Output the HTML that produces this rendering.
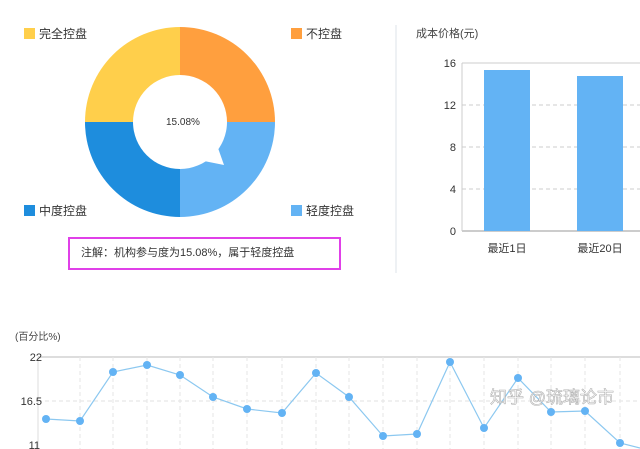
<!DOCTYPE html>
<html><head><meta charset="utf-8"><style>
body{margin:0;width:640px;height:449px;background:#fff;overflow:hidden;font-family:"Liberation Sans","Noto Sans CJK SC",sans-serif;}
</style></head><body>
<svg width="640" height="449" xmlns="http://www.w3.org/2000/svg" style="position:absolute;left:0;top:0" font-family="Liberation Sans, Noto Sans CJK SC, sans-serif">
<!-- donut -->
<path d="M180,122 L180,27 A95,95 0 0 0 85,122 Z" fill="#FFCF4B"/>
<path d="M180,122 L180,27 A95,95 0 0 1 275,122 Z" fill="#FF9F3E"/>
<path d="M180,122 L275,122 A95,95 0 0 1 180,217 Z" fill="#63B3F4"/>
<path d="M180,122 L180,217 A95,95 0 0 1 85,122 Z" fill="#1E8DDD"/>
<circle cx="180" cy="122" r="47" fill="#fff"/>
<path d="M218,148 L224,165 L204,161 Z" fill="#fff"/>
<text x="166" y="125" font-size="10" fill="#333">15.08%</text>
<rect x="24" y="28" width="11" height="11" fill="#FFCF4B"/>
<text x="39" y="38" font-size="12" fill="#333">完全控盘</text>
<rect x="291" y="28" width="11" height="11" fill="#FF9F3E"/>
<text x="306" y="38" font-size="12" fill="#333">不控盘</text>
<rect x="24" y="205" width="11" height="11" fill="#1E8DDD"/>
<text x="39" y="215" font-size="12" fill="#333">中度控盘</text>
<rect x="291" y="205" width="11" height="11" fill="#63B3F4"/>
<text x="306" y="215" font-size="12" fill="#333">轻度控盘</text>
<rect x="69" y="238" width="271" height="31" fill="none" stroke="#E040E8" stroke-width="2"/>
<text x="81" y="256" font-size="11" fill="#333">注解：机构参与度为15.08%，属于轻度控盘</text>
<line x1="396" y1="25" x2="396" y2="273" stroke="#dde3ea"/>
<!-- bar chart -->
<text x="416" y="37" font-size="11" fill="#444">成本价格(元)</text>
<line x1="462" y1="63" x2="640" y2="63" stroke="#ccc"/>
<g stroke="#ccc" stroke-dasharray="4,3"><line x1="462" y1="105" x2="640" y2="105"/><line x1="462" y1="147" x2="640" y2="147"/><line x1="462" y1="189" x2="640" y2="189"/></g>
<line x1="462" y1="231" x2="640" y2="231" stroke="#999"/>
<line x1="462" y1="63" x2="462" y2="231" stroke="#ccc"/>
<g font-size="11" fill="#333" text-anchor="end"><text x="456" y="67">16</text><text x="456" y="109">12</text><text x="456" y="151">8</text><text x="456" y="193">4</text><text x="456" y="235">0</text></g>
<rect x="484" y="70" width="46" height="161" fill="#63B3F4"/>
<rect x="577" y="76" width="46" height="155" fill="#63B3F4"/>
<text x="507" y="252" font-size="11" fill="#333" text-anchor="middle">最近1日</text>
<text x="600" y="252" font-size="11" fill="#333" text-anchor="middle">最近20日</text>
<!-- line chart -->
<text x="15" y="340" font-size="10" fill="#444">(百分比%)</text>
<line x1="38" y1="357" x2="640" y2="357" stroke="#ddd" stroke-width="2"/>
<line x1="38" y1="401" x2="640" y2="401" stroke="#e2e2e2" stroke-dasharray="4,3"/>
<g stroke="#e6e6e6" stroke-dasharray="4,3">
<line x1="80" y1="357" x2="80" y2="449"/><line x1="113" y1="357" x2="113" y2="449"/><line x1="147" y1="357" x2="147" y2="449"/><line x1="180" y1="357" x2="180" y2="449"/><line x1="213" y1="357" x2="213" y2="449"/><line x1="247" y1="357" x2="247" y2="449"/><line x1="282" y1="357" x2="282" y2="449"/><line x1="316" y1="357" x2="316" y2="449"/><line x1="349" y1="357" x2="349" y2="449"/><line x1="383" y1="357" x2="383" y2="449"/><line x1="417" y1="357" x2="417" y2="449"/><line x1="450" y1="357" x2="450" y2="449"/><line x1="484" y1="357" x2="484" y2="449"/><line x1="518" y1="357" x2="518" y2="449"/><line x1="551" y1="357" x2="551" y2="449"/><line x1="585" y1="357" x2="585" y2="449"/><line x1="620" y1="357" x2="620" y2="449"/></g>
<line x1="38" y1="357" x2="38" y2="449" stroke="#ddd"/>
<g font-size="11" fill="#333" text-anchor="end"><text x="42" y="361">22</text><text x="42" y="405">16.5</text><text x="40" y="449">11</text></g>
<polyline fill="none" stroke="#8cc8f0" stroke-width="1.2" points="46,419 80,421 113,372 147,365 180,375 213,397 247,409 282,413 316,373 349,397 383,436 417,434 450,362 484,428 518,378 551,412 585,411 620,443 640,448"/>
<g fill="#63B3F4">
<circle cx="46" cy="419" r="4"/><circle cx="80" cy="421" r="4"/><circle cx="113" cy="372" r="4"/><circle cx="147" cy="365" r="4"/><circle cx="180" cy="375" r="4"/><circle cx="213" cy="397" r="4"/><circle cx="247" cy="409" r="4"/><circle cx="282" cy="413" r="4"/><circle cx="316" cy="373" r="4"/><circle cx="349" cy="397" r="4"/><circle cx="383" cy="436" r="4"/><circle cx="417" cy="434" r="4"/><circle cx="450" cy="362" r="4"/><circle cx="484" cy="428" r="4"/><circle cx="518" cy="378" r="4"/><circle cx="551" cy="412" r="4"/><circle cx="585" cy="411" r="4"/><circle cx="620" cy="443" r="4"/></g>
<text x="490" y="403" font-size="17" fill="#fff" stroke="#aaa" stroke-width="0.6" opacity="0.9">知乎 @琉璃论市</text>
</svg>
</body></html>
